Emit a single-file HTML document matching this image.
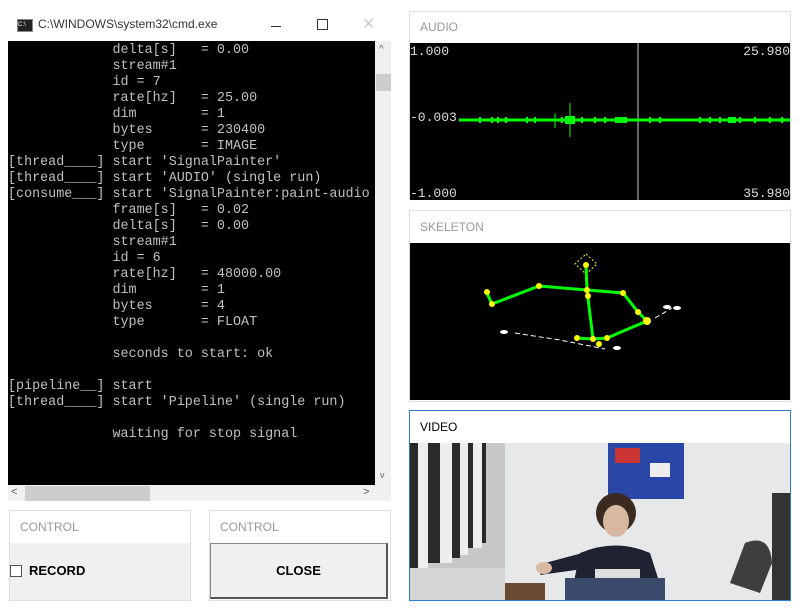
<!DOCTYPE html>
<html><head><style>
body{margin:0;width:802px;height:612px;background:#fff;position:relative;overflow:hidden;font-family:"Liberation Sans",sans-serif}
.a{position:absolute}
.con{left:8px;top:41px;width:367px;height:444px;background:#000;font-family:"Liberation Mono",monospace;font-size:13.4px;line-height:16px;color:#c0c0c0;white-space:pre;overflow:hidden;padding-top:2px;box-sizing:border-box}
.hdr{font-size:12px;color:#999}
</style></head><body>
<div class="a" style="left:8px;top:8px;width:382px;height:33px;background:#fff"></div>
<div class="a" style="left:17px;top:19px;width:14px;height:11px;background:#222;border:1px solid #888;font-size:6px;color:#fff;line-height:11px">C:\</div>
<div class="a" style="left:38px;top:17px;font-size:12px;color:#333">C:\WINDOWS\system32\cmd.exe</div>
<div class="a" style="left:271px;top:26px;width:10px;height:1px;background:#333"></div>
<div class="a" style="left:317px;top:19px;width:9px;height:9px;border:1px solid #333"></div>
<div class="a" style="left:362px;top:14px;font-size:16px;color:#ccc">✕</div>
<div class="a con">             delta[s]   = 0.00
             stream#1
             id = 7
             rate[hz]   = 25.00
             dim        = 1
             bytes      = 230400
             type       = IMAGE
[thread____] start 'SignalPainter'
[thread____] start 'AUDIO' (single run)
[consume___] start 'SignalPainter:paint-audio
             frame[s]   = 0.02
             delta[s]   = 0.00
             stream#1
             id = 6
             rate[hz]   = 48000.00
             dim        = 1
             bytes      = 4
             type       = FLOAT

             seconds to start: ok

[pipeline__] start
[thread____] start 'Pipeline' (single run)

             waiting for stop signal</div>
<div class="a" style="left:375px;top:41px;width:16px;height:460px;background:#f0f0f0"></div>
<div class="a" style="left:376px;top:74px;width:15px;height:17px;background:#cdcdcd"></div>
<div class="a" style="left:379px;top:44px;font-size:10px;color:#666">^</div>
<div class="a" style="left:380px;top:470px;font-size:9px;color:#666">v</div>
<div class="a" style="left:8px;top:485px;width:367px;height:16px;background:#f0f0f0"></div>
<div class="a" style="left:25px;top:486px;width:125px;height:15px;background:#cdcdcd"></div>
<div class="a" style="left:11px;top:486px;font-size:11px;color:#555">&lt;</div>
<div class="a" style="left:363px;top:486px;font-size:11px;color:#555">&gt;</div>

<div class="a" style="left:9px;top:510px;width:180px;height:89px;border:1px solid #ddd;background:#f0f0f0"></div>
<div class="a" style="left:10px;top:511px;width:180px;height:32px;background:#fff"></div>
<div class="a hdr" style="left:20px;top:520px">CONTROL</div>
<div class="a" style="left:10px;top:565px;width:10px;height:10px;border:1px solid #555;background:#fff"></div>
<div class="a" style="left:29px;top:563px;font-size:13px;font-weight:bold;color:#000">RECORD</div>
<div class="a" style="left:209px;top:510px;width:180px;height:89px;border:1px solid #ddd;background:#fff"></div>
<div class="a hdr" style="left:220px;top:520px">CONTROL</div>
<div class="a" style="left:210px;top:543px;width:175px;height:53px;background:#f0f0f0;border:1px solid #888;border-right:2px solid #555;border-bottom:2px solid #555;text-align:center;line-height:53px;font-size:13px;font-weight:bold;color:#000">CLOSE</div>

<div class="a" style="left:409px;top:11px;width:380px;height:189px;border:1px solid #ddd;border-bottom:none"></div>
<div class="a hdr" style="left:420px;top:20px">AUDIO</div>
<svg class="a" style="left:410px;top:43px" width="380" height="157">
<rect width="380" height="157" fill="#000"/>
<line x1="228" y1="0" x2="228" y2="157" stroke="#ccc"/>
<line x1="49" y1="77" x2="380" y2="77" stroke="#0f0" stroke-width="3"/>
<line x1="160" y1="60" x2="160" y2="94" stroke="#0f0"/>
<line x1="145" y1="70" x2="145" y2="85" stroke="#0f0"/>
<g stroke="#0f0" stroke-width="2"><path d="M70 74v6M82 74v6M88 74v6M96 74v6M117 74v6M125 74v6M152 74v6M172 74v6M185 74v6M195 74v6M215 74v6M240 74v6M250 74v6M290 74v6M300 74v6M310 74v6M330 74v6M345 74v6M360 74v6M372 74v6"/></g>
<rect x="155" y="73" width="10" height="8" fill="#0f0"/><rect x="205" y="74" width="12" height="6" fill="#0f0"/><rect x="318" y="74" width="8" height="6" fill="#0f0"/>
<text x="0" y="12" fill="#ddd" font-family="Liberation Mono" font-size="13">1.000</text>
<text x="380" y="12" fill="#ddd" font-family="Liberation Mono" font-size="13" text-anchor="end">25.980</text>
<text x="0" y="78" fill="#ddd" font-family="Liberation Mono" font-size="13">-0.003</text>
<text x="0" y="154" fill="#ddd" font-family="Liberation Mono" font-size="13">-1.000</text>
<text x="380" y="154" fill="#ddd" font-family="Liberation Mono" font-size="13" text-anchor="end">35.980</text>
</svg>

<div class="a" style="left:409px;top:210px;width:380px;height:190px;border:1px solid #ddd"></div>
<div class="a hdr" style="left:420px;top:220px">SKELETON</div>
<svg class="a" style="left:410px;top:243px" width="380" height="157">
<rect width="380" height="157" fill="#000"/>
<g transform="translate(-410,-243)">
<path d="M586 254 L597 264 L586 274 L575 264 Z" fill="none" stroke="#ff0" stroke-dasharray="2 2"/>
<g stroke="#0f0" stroke-width="3" fill="none">
<path d="M586 265 L587 290 L593 339"/>
<path d="M486 291 L492 304 L539 286 L587 290 L623 293 L638 312 L647 321 L607 338 L593 339 L577 338"/>
</g>
<g fill="#ff0"><circle cx="586" cy="265" r="3"/><circle cx="587" cy="290" r="3"/><circle cx="588" cy="296" r="3"/><circle cx="539" cy="286" r="3"/><circle cx="492" cy="304" r="3"/><circle cx="487" cy="292" r="3"/><circle cx="623" cy="293" r="3"/><circle cx="638" cy="312" r="3"/><circle cx="647" cy="321" r="4"/><circle cx="607" cy="338" r="3"/><circle cx="593" cy="339" r="3"/><circle cx="577" cy="338" r="3"/><circle cx="599" cy="344" r="3"/></g>
<g fill="#fff"><ellipse cx="504" cy="332" rx="4" ry="2"/><ellipse cx="617" cy="348" rx="4" ry="2"/><ellipse cx="667" cy="307" rx="4" ry="2"/><ellipse cx="677" cy="308" rx="4" ry="2"/></g>
<path d="M515 333 L560 340 L605 349 M655 318 L672 308" stroke="#fff" stroke-dasharray="5 3"/>
</g></svg>

<div class="a" style="left:409px;top:410px;width:380px;height:189px;border:1px solid #2b7cd3"></div>
<div class="a" style="left:420px;top:420px;font-size:12px;color:#000">VIDEO</div>
<svg class="a" style="left:410px;top:443px" width="380" height="157">
<rect width="380" height="157" fill="#e6e8ea"/>
<rect width="95" height="157" fill="#c8c8c8"/>
<g fill="#2a2a2a"><rect x="0" y="0" width="8" height="130"/><rect x="18" y="0" width="12" height="120"/><rect x="42" y="0" width="8" height="115"/><rect x="58" y="0" width="5" height="105"/><rect x="72" y="0" width="4" height="100"/></g>
<g fill="#eee"><rect x="8" y="0" width="10" height="130"/><rect x="30" y="0" width="12" height="120"/><rect x="50" y="0" width="8" height="112"/><rect x="63" y="0" width="9" height="105"/></g>
<rect x="0" y="125" width="95" height="32" fill="#d6d6d6"/>
<rect x="198" y="0" width="76" height="56" fill="#2a47a8"/>
<rect x="205" y="5" width="25" height="15" fill="#c33"/>
<rect x="240" y="20" width="20" height="14" fill="#eee"/>
<rect x="362" y="50" width="18" height="107" fill="#333"/>
<ellipse cx="206" cy="70" rx="20" ry="20" fill="#3a2a20"/>
<ellipse cx="206" cy="78" rx="13" ry="16" fill="#d8b8a0"/>
<path d="M170 110 Q206 95 240 110 L255 157 L160 157 Z" fill="#1f2230"/>
<path d="M180 108 L135 120 L130 132 L180 125 Z" fill="#1f2230"/>
<ellipse cx="134" cy="125" rx="8" ry="6" fill="#d8b8a0"/>
<rect x="185" y="126" width="45" height="14" fill="#ddd"/>
<path d="M335 100 Q360 90 362 120 L350 150 L320 140 Z" fill="#3c3e40"/>
<rect x="155" y="135" width="100" height="22" fill="#3a4a6a"/>
<rect x="95" y="140" width="40" height="17" fill="#6a4a30"/>
</svg>
</body></html>
